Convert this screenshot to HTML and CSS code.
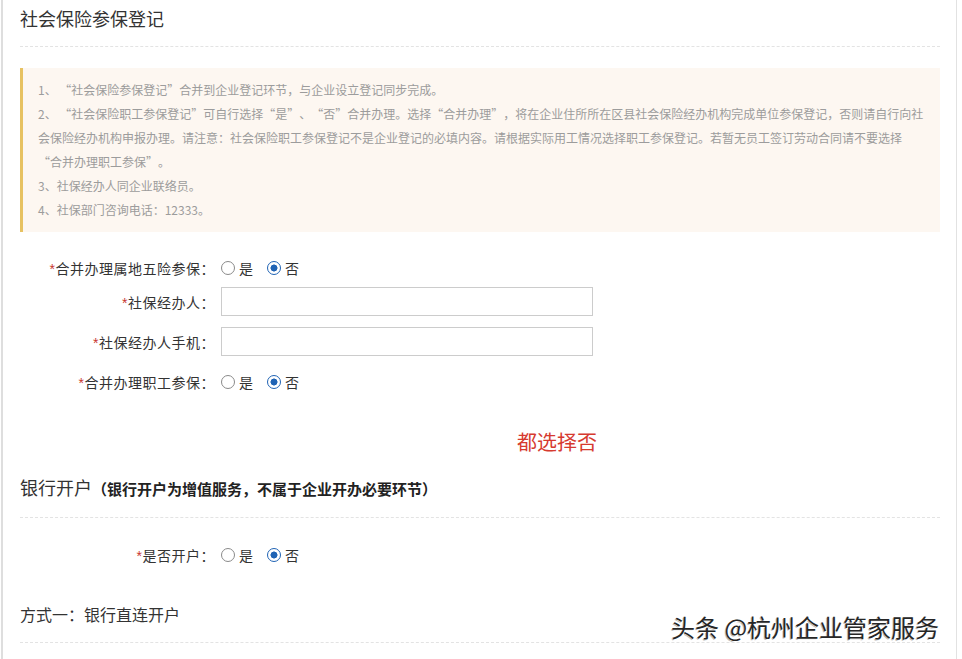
FILE: index.html
```html
<!DOCTYPE html>
<html lang="zh-CN">
<head>
  <meta charset="UTF-8" />
  <meta name="viewport" content="width=device-width, initial-scale=1.0">
  <title>社会保险参保登记</title>
  <link rel="stylesheet" href="styles.css">
</head>
<body>
  <div class="page">
    <!-- 社保登记 -->
    <div class="section-title">社会保险参保登记</div>

    <div class="notice">
      <p>1、 “社会保险参保登记”合并到企业登记环节，与企业设立登记同步完成。</p>
      <p>2、 “社会保险职工参保登记”可自行选择“是”、“否”合并办理。选择“合并办理”，将在企业住所所在区县社会保险经办机构完成单位参保登记，否则请自行向社<br>会保险经办机构申报办理。请注意：社会保险职工参保登记不是企业登记的必填内容。请根据实际用工情况选择职工参保登记。若暂无员工签订劳动合同请不要选择<br>“合并办理职工参保”。</p>
      <p>3、社保经办人同企业联络员。</p>
      <p>4、社保部门咨询电话：12333。</p>
    </div>

    <div class="form">
      <div class="form-row tight">
        <label class="form-label"><span class="req">*</span>合并办理属地五险参保<span class="colon">：</span></label>
        <div class="radio-group">
          <span class="radio"><span class="radio-dot"></span>是</span>
          <span class="radio checked"><span class="radio-dot"></span>否</span>
        </div>
      </div>
      <div class="form-row">
        <label class="form-label"><span class="req">*</span>社保经办人<span class="colon">：</span></label>
        <input class="form-input" type="text">
      </div>
      <div class="form-row">
        <label class="form-label"><span class="req">*</span>社保经办人手机<span class="colon">：</span></label>
        <input class="form-input" type="text">
      </div>
      <div class="form-row">
        <label class="form-label"><span class="req">*</span>合并办理职工参保<span class="colon">：</span></label>
        <div class="radio-group">
          <span class="radio"><span class="radio-dot"></span>是</span>
          <span class="radio checked"><span class="radio-dot"></span>否</span>
        </div>
      </div>
    </div>

    <div class="annotation">都选择否</div>

    <!-- 银行开户 -->
    <div class="section-title">银行开户<span class="title-note">（银行开户为增值服务，不属于企业开办必要环节）</span></div>

    <div class="form bank-form">
      <div class="form-row">
        <label class="form-label"><span class="req">*</span>是否开户<span class="colon">：</span></label>
        <div class="radio-group">
          <span class="radio"><span class="radio-dot"></span>是</span>
          <span class="radio checked"><span class="radio-dot"></span>否</span>
        </div>
      </div>
    </div>

    <div class="sub-title">方式一<span class="colon">：</span>银行直连开户</div>

    <div class="watermark">头条 @杭州企业管家服务</div>
  </div>
</body>
</html>
```

FILE: styles.css
```css
* {
  margin: 0;
  padding: 0;
  box-sizing: border-box;
}
body {
  background-color: #fff;
  font-family: "Noto Sans CJK SC", "Liberation Sans", sans-serif;
  color: #333;
  text-spacing-trim: space-all;
}
.page {
  position: relative;
  width: 956px;
  min-height: 659px;
  margin-left: 1px;
  padding: 6px 16px 0 17px;
  border-left: 2px solid #dedede;
  border-right: 1px solid #e2e2e2;
}
/* centred full-width colon, like the original UI font */
.colon {
  font-family: "Noto Sans CJK TC", sans-serif;
}
/* Section headings */
.section-title {
  font-size: 18px;
  line-height: 24px;
  color: #333;
  padding-bottom: 16px;
  border-bottom: 1px dashed #e3e3e3;
}
.title-note {
  font-size: 15px;
  font-weight: 700;
  color: #222;
}
.sub-title {
  margin-top: 33px;
  font-size: 16px;
  line-height: 24px;
  color: #333;
  padding-bottom: 16px;
  border-bottom: 1px dashed #e3e3e3;
}
/* Notice box */
.notice {
  margin-top: 21px;
  background-color: #fdf7f1;
  border-left: 3px solid #e7c262;
  padding: 10px 0 10px 15px;
  font-size: 12px;
  line-height: 24px;
  color: #9c9c9c;
}
/* Form rows */
.form {
  margin-top: 21px;
}
.form-row {
  display: flex;
  align-items: center;
  height: 29px;
  margin-bottom: 11px;
}
.form-row.tight {
  margin-bottom: 5px;
}
.form-label {
  width: 195px;
  text-align: right;
  font-size: 14px;
  letter-spacing: 0.5px;
  color: #333;
  margin-right: 6px;
}
.req {
  color: #c8362f;
  font-family: "Liberation Sans", sans-serif;
}
.form-input {
  width: 372px;
  height: 29px;
  border: 1px solid #cccccc;
  outline: none;
}
.radio-group {
  display: flex;
  align-items: center;
  font-size: 14px;
}
.radio {
  display: inline-flex;
  align-items: center;
  margin-right: 14px;
}
.radio-dot {
  width: 14px;
  height: 14px;
  border: 1.5px solid #8a8a8a;
  border-radius: 50%;
  margin-right: 4px;
  background-color: #fff;
}
.radio.checked .radio-dot {
  border: 1.5px solid #1f63b4;
  background: radial-gradient(circle, #1f63b4 0 3.2px, #fff 3.8px);
}
/* Red note */
.annotation {
  margin: 32px 0 19px 497px;
  font-size: 20px;
  line-height: 28px;
  color: #d63a2f;
}
.bank-form {
  margin-top: 22px;
}
.watermark {
  position: absolute;
  left: 668px;
  top: 612px;
  font-size: 24px;
  line-height: 30px;
  color: #262626;
  text-shadow: 1px 1px 0 #fff, -1px 1px 0 #bbb;
}
```
